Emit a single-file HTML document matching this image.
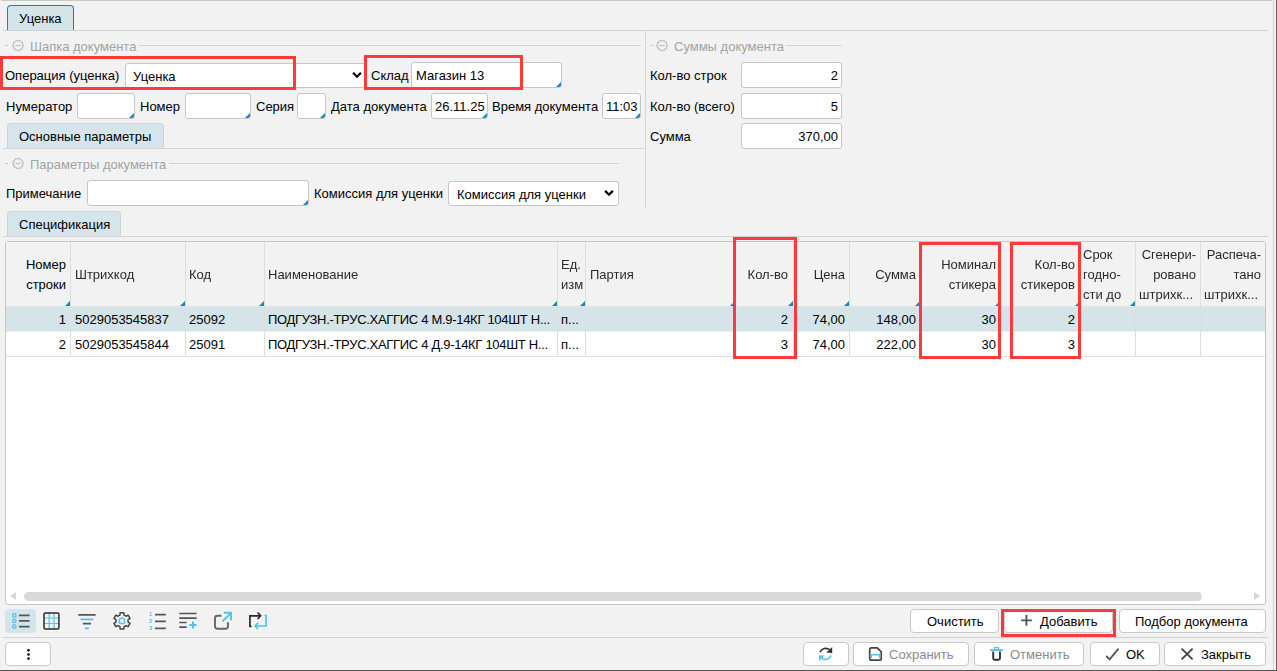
<!DOCTYPE html>
<html><head><meta charset="utf-8">
<style>
*{box-sizing:border-box;margin:0;padding:0}
html,body{width:1277px;height:671px;overflow:hidden;background:#f2f2f2;font-family:"Liberation Sans",sans-serif;font-size:13px;color:#000}
.a{position:absolute}
.t{position:absolute;white-space:nowrap;line-height:15px}
.r{text-align:right}
.hl{position:absolute;height:1px;background:#d2d2d2}
.vl{position:absolute;width:1px;background:#d2d2d2}
.inp{position:absolute;background:#fff;border:1px solid #c6c6c6;border-radius:3px}
.tri{position:absolute;width:0;height:0;border-style:solid;border-width:0 0 5px 5px;border-color:transparent transparent #0b87c4 transparent;border-bottom-right-radius:2.5px}
.gh{color:#a2a2a2}
.circ{position:absolute;width:11px;height:11px;border:1.3px solid #c4c4c4;border-radius:50%}
.circ:after{content:"";position:absolute;left:2px;right:2px;top:3.6px;height:1.3px;background:#c4c4c4}
.dash{position:absolute;width:3px;height:1px;background:#c8c8c8}
.tab{position:absolute;background:#d5e5eb;border:1px solid #c9d7dc;border-bottom:none;border-radius:4px 4px 0 0}
.red{position:absolute;border:3px solid #fc3a3a}
.btn{position:absolute;background:#fff;border:1px solid #c9c9c9;border-radius:4px}
.chev{position:absolute;width:7px;height:7px;border-right:2px solid #111;border-bottom:2px solid #111;transform:rotate(45deg)}
.hd{color:#2a2a2a;will-change:transform}
.gv{position:absolute;width:1px;background:#dedede}
</style></head><body>
<!-- frame lines -->
<div class="hl" style="left:1px;top:0;width:1271px;background:#c9c9c9"></div>
<div class="vl" style="left:1273px;top:0;height:671px;background:#d6d6d6"></div>
<div class="vl" style="left:1276px;top:0;height:671px;background:#636363"></div>
<div class="hl" style="left:0;top:670px;width:1277px;background:#555"></div>

<!-- Top tab -->
<div class="tab" style="left:7px;top:5px;width:67px;height:26px;border:1.5px solid #0b87c0;border-bottom:none;background:#d4e5e9"></div>
<div class="t" style="left:19px;top:11px">Уценка</div>
<div class="hl" style="left:3px;top:30px;width:1265px"></div>

<!-- vertical divider -->
<div class="vl" style="left:645px;top:31px;height:178px;background:#d4d4d4"></div>

<!-- Group: Шапка документа -->
<div class="dash" style="left:5px;top:45px"></div>
<svg class="a" style="left:0;top:0" width="1277" height="671" viewBox="0 0 1277 671"><g fill="none" stroke="#c3c3c3"><circle cx="18.1" cy="45.5" r="4.95" stroke-width="1.5"/><path d="M15.4 45.5H20.7" stroke-width="1.3"/></g></svg>
<div class="t gh" style="left:30px;top:39px">Шапка документа</div>
<div class="hl" style="left:139px;top:45px;width:502px"></div>

<!-- Row A -->
<div class="t" style="left:5px;top:68px">Операция (уценка)</div>
<div class="inp" style="left:125px;top:63px;width:241px;height:25px"></div>
<div class="t" style="left:133px;top:69px">Уценка</div>
<svg class="a" style="left:0;top:0" width="1277" height="671" viewBox="0 0 1277 671"><path d="M353.1 72.8L357.0 76.7L360.9 72.8" fill="none" stroke="#000" stroke-width="2.2"/></svg>
<div class="t" style="left:371px;top:68px">Склад</div>
<div class="inp" style="left:411px;top:62px;width:151px;height:26px"></div>
<div class="tri" style="left:556px;top:82px"></div>
<div class="t" style="left:416px;top:68px">Магазин 13</div>

<!-- Row B -->
<div class="t" style="left:6px;top:99px">Нумератор</div>
<div class="inp" style="left:77px;top:93px;width:58px;height:26px"></div>
<div class="tri" style="left:129px;top:113px"></div>
<div class="t" style="left:140px;top:99px">Номер</div>
<div class="inp" style="left:185px;top:93px;width:66px;height:26px"></div>
<div class="tri" style="left:245px;top:113px"></div>
<div class="t" style="left:256px;top:99px">Серия</div>
<div class="inp" style="left:297px;top:93px;width:29px;height:26px"></div>
<div class="tri" style="left:320px;top:113px"></div>
<div class="t" style="left:331px;top:99px">Дата документа</div>
<div class="inp" style="left:431px;top:93px;width:57px;height:26px"></div>
<div class="tri" style="left:482px;top:113px"></div>
<div class="t" style="left:435px;top:99px">26.11.25</div>
<div class="t" style="left:492px;top:99px">Время документа</div>
<div class="inp" style="left:602px;top:93px;width:39px;height:26px"></div>
<div class="tri" style="left:635px;top:113px"></div>
<div class="t" style="left:606px;top:99px">11:03</div>

<!-- Right: Суммы документа -->
<div class="dash" style="left:650px;top:45px"></div>
<svg class="a" style="left:0;top:0" width="1277" height="671" viewBox="0 0 1277 671"><g fill="none" stroke="#c3c3c3"><circle cx="662.1" cy="45.5" r="4.95" stroke-width="1.5"/><path d="M659.4 45.5H664.7" stroke-width="1.3"/></g></svg>
<div class="t gh" style="left:674px;top:39px">Суммы документа</div>
<div class="hl" style="left:786px;top:45px;width:56px"></div>
<div class="t" style="left:650px;top:68px">Кол-во строк</div>
<div class="inp" style="left:741px;top:62px;width:101px;height:26px"></div>
<div class="t r" style="left:741px;top:68px;width:97px">2</div>
<div class="t" style="left:650px;top:99px">Кол-во (всего)</div>
<div class="inp" style="left:741px;top:93px;width:101px;height:26px"></div>
<div class="t r" style="left:741px;top:99px;width:97px">5</div>
<div class="t" style="left:650px;top:129px">Сумма</div>
<div class="inp" style="left:741px;top:123px;width:101px;height:26px"></div>
<div class="t r" style="left:741px;top:129px;width:97px">370,00</div>

<!-- Tab Основные параметры -->
<div class="tab" style="left:7px;top:123px;width:157px;height:26px"></div>
<div class="t" style="left:19px;top:129px">Основные параметры</div>
<div class="hl" style="left:3px;top:148px;width:642px"></div>

<!-- Group Параметры документа -->
<div class="dash" style="left:5px;top:163px"></div>
<svg class="a" style="left:0;top:0" width="1277" height="671" viewBox="0 0 1277 671"><g fill="none" stroke="#c3c3c3"><circle cx="18.1" cy="163.5" r="4.95" stroke-width="1.5"/><path d="M15.4 163.5H20.7" stroke-width="1.3"/></g></svg>
<div class="t gh" style="left:30px;top:157px">Параметры документа</div>
<div class="hl" style="left:169px;top:163px;width:450px"></div>

<div class="t" style="left:6px;top:186px">Примечание</div>
<div class="inp" style="left:87px;top:180px;width:222px;height:26px"></div>
<div class="tri" style="left:303px;top:200px"></div>
<div class="t" style="left:314px;top:186px">Комиссия для уценки</div>
<div class="inp" style="left:448px;top:181px;width:171px;height:25px"></div>
<div class="t" style="left:457px;top:187px">Комиссия для уценки</div>
<svg class="a" style="left:0;top:0" width="1277" height="671" viewBox="0 0 1277 671"><path d="M605.1 190.9L609.0 194.8L612.9 190.9" fill="none" stroke="#000" stroke-width="2.2"/></svg>

<!-- Tab Спецификация -->
<div class="tab" style="left:7px;top:211px;width:114px;height:26px"></div>
<div class="t" style="left:19px;top:217px">Спецификация</div>
<div class="hl" style="left:3px;top:236px;width:1265px"></div>

<!-- Grid -->
<div class="a" style="left:5px;top:241px;width:1261px;height:364px;background:#fff;border:1px solid #c6c6c6;border-radius:3px;overflow:hidden"></div>
<div class="a" style="left:6px;top:242px;width:1259px;height:64px;background:#f2f2f2;border-radius:2px 2px 0 0"></div>
<div class="a" style="left:6px;top:306px;width:1259px;height:1px;background:#e3e6e7"></div><div class="a" style="left:6px;top:307px;width:1259px;height:24px;background:#d4e4e9"></div><div class="a" style="left:6px;top:331px;width:1259px;height:1px;background:#ededed"></div>
<div class="a" style="left:6px;top:356px;width:1259px;height:1px;background:#e2e2e2"></div>
<div class="gv" style="left:70px;top:242px;height:115px"></div>
<div class="gv" style="left:185px;top:242px;height:115px"></div>
<div class="gv" style="left:264px;top:242px;height:115px"></div>
<div class="gv" style="left:557px;top:242px;height:115px"></div>
<div class="gv" style="left:585px;top:242px;height:115px"></div>
<div class="gv" style="left:735px;top:242px;height:115px"></div>
<div class="gv" style="left:793px;top:242px;height:115px"></div>
<div class="gv" style="left:849px;top:242px;height:115px"></div>
<div class="gv" style="left:920px;top:242px;height:115px"></div>
<div class="gv" style="left:1000px;top:242px;height:115px"></div>
<div class="gv" style="left:1080px;top:242px;height:115px"></div>
<div class="gv" style="left:1135px;top:242px;height:115px"></div>
<div class="gv" style="left:1200px;top:242px;height:115px"></div>
<div class="tri" style="left:65px;top:301px;border-radius:0"></div>
<div class="tri" style="left:180px;top:301px;border-radius:0"></div>
<div class="tri" style="left:259px;top:301px;border-radius:0"></div>
<div class="tri" style="left:552px;top:301px;border-radius:0"></div>
<div class="tri" style="left:580px;top:301px;border-radius:0"></div>
<div class="tri" style="left:730px;top:301px;border-radius:0"></div>
<div class="tri" style="left:788px;top:301px;border-radius:0"></div>
<div class="tri" style="left:844px;top:301px;border-radius:0"></div>
<div class="tri" style="left:915px;top:301px;border-radius:0"></div>
<div class="tri" style="left:995px;top:301px;border-radius:0"></div>
<div class="tri" style="left:1075px;top:301px;border-radius:0"></div>
<div class="tri" style="left:1130px;top:301px;border-radius:0"></div>
<div class="t r " style="left:-134px;top:257px;width:200px">Номер</div>
<div class="t r " style="left:-134px;top:277px;width:200px">строки</div>
<div class="t hd " style="left:75px;top:267px">Штрихкод</div>
<div class="t hd " style="left:189px;top:267px">Код</div>
<div class="t hd " style="left:268px;top:267px">Наименование</div>
<div class="t hd " style="left:561px;top:257px">Ед.</div>
<div class="t hd " style="left:561px;top:277px">изм</div>
<div class="t hd " style="left:590px;top:267px">Партия</div>
<div class="t hd r " style="left:588px;top:267px;width:200px">Кол-во</div>
<div class="t hd r " style="left:645px;top:267px;width:200px">Цена</div>
<div class="t hd r " style="left:716px;top:267px;width:200px">Сумма</div>
<div class="t hd r " style="left:796px;top:257px;width:200px">Номинал</div>
<div class="t hd r " style="left:796px;top:277px;width:200px">стикера</div>
<div class="t hd r " style="left:875px;top:257px;width:200px">Кол-во</div>
<div class="t hd r " style="left:875px;top:277px;width:200px">стикеров</div>
<div class="t hd " style="left:1083px;top:247px">Срок</div>
<div class="t hd " style="left:1083px;top:267px">годно-</div>
<div class="t hd " style="left:1083px;top:287px">сти до</div>
<div class="t hd r " style="left:996px;top:247px;width:200px">Сгенери-</div>
<div class="t hd r " style="left:996px;top:267px;width:200px">ровано</div>
<div class="t hd r " style="left:993px;top:287px;width:200px">штрихк...</div>
<div class="t hd r " style="left:1061px;top:247px;width:200px">Распеча-</div>
<div class="t hd r " style="left:1061px;top:267px;width:200px">тано</div>
<div class="t hd r " style="left:1058px;top:287px;width:200px">штрихк...</div>
<div class="t r " style="left:-134px;top:312px;width:200px">1</div>
<div class="t " style="left:75px;top:312px">5029053545837</div>
<div class="t " style="left:189px;top:312px">25092</div>
<div class="t" style="left:268px;top:312px;letter-spacing:-0.3px">ПОДГУЗН.-ТРУС.ХАГГИС 4 М.9-14КГ 104ШТ Н...</div>
<div class="t " style="left:561px;top:312px">п...</div>
<div class="t r " style="left:588px;top:312px;width:200px">2</div>
<div class="t r " style="left:645px;top:312px;width:200px">74,00</div>
<div class="t r " style="left:716px;top:312px;width:200px">148,00</div>
<div class="t r " style="left:796px;top:312px;width:200px">30</div>
<div class="t r " style="left:875px;top:312px;width:200px">2</div>
<div class="t r " style="left:-134px;top:337px;width:200px">2</div>
<div class="t " style="left:75px;top:337px">5029053545844</div>
<div class="t " style="left:189px;top:337px">25091</div>
<div class="t" style="left:268px;top:337px;letter-spacing:-0.3px">ПОДГУЗН.-ТРУС.ХАГГИС 4 Д.9-14КГ 104ШТ Н...</div>
<div class="t " style="left:561px;top:337px">п...</div>
<div class="t r " style="left:588px;top:337px;width:200px">3</div>
<div class="t r " style="left:645px;top:337px;width:200px">74,00</div>
<div class="t r " style="left:716px;top:337px;width:200px">222,00</div>
<div class="t r " style="left:796px;top:337px;width:200px">30</div>
<div class="t r " style="left:875px;top:337px;width:200px">3</div>
<div class="a" style="left:10px;top:592px;width:0;height:0;border-style:solid;border-width:4.5px 6px 4.5px 0;border-color:transparent #d6d6d6 transparent transparent"></div>
<div class="a" style="left:24px;top:592px;width:1178px;height:9px;background:#d9d9d9;border-radius:4.5px"></div>
<div class="a" style="left:1254px;top:592px;width:0;height:0;border-style:solid;border-width:4.5px 0 4.5px 6px;border-color:transparent transparent transparent #d6d6d6"></div>
<div class="hl" style="left:3px;top:637px;width:1265px"></div>
<div class="a" style="left:5px;top:609px;width:31px;height:24px;background:#d3e4ea;border-radius:4px"></div>
<div class="btn" style="left:910px;top:609px;width:89px;height:24px"></div>
<div class="t" style="left:927px;top:614px">Очистить</div>
<div class="btn" style="left:1004px;top:610px;width:109px;height:23px"></div>
<div class="t" style="left:1040px;top:614px">Добавить</div>
<div class="btn" style="left:1119px;top:609px;width:147px;height:24px"></div>
<div class="t" style="left:1135px;top:614px">Подбор документа</div>
<div class="btn" style="left:5px;top:642px;width:46px;height:24px"></div>
<div class="btn" style="left:803px;top:642px;width:46px;height:24px"></div>
<div class="btn" style="left:853px;top:642px;width:116px;height:24px"></div>
<div class="t" style="left:889px;top:647px;color:#8a8a8a">Сохранить</div>
<div class="btn" style="left:974px;top:642px;width:110px;height:24px"></div>
<div class="t" style="left:1010px;top:647px;color:#8a8a8a">Отменить</div>
<div class="btn" style="left:1090px;top:642px;width:70px;height:24px"></div>
<div class="t" style="left:1126px;top:647px">OK</div>
<div class="btn" style="left:1164px;top:642px;width:102px;height:24px"></div>
<div class="t" style="left:1201px;top:647px">Закрыть</div>
<div class="red" style="left:0;top:56px;width:296px;height:34px"></div>
<div class="red" style="left:364px;top:55px;width:159px;height:35px"></div>
<div class="red" style="left:733px;top:237px;width:64px;height:122px"></div>
<div class="red" style="left:919px;top:242px;width:82px;height:117px"></div>
<div class="red" style="left:1010px;top:242px;width:71px;height:117px"></div>
<div class="red" style="left:1001px;top:609px;width:115px;height:28px"></div>

<!-- toolbar icons -->
<svg class="a" style="left:0;top:600px" width="280" height="40" viewBox="0 600 280 40">
 <g fill="none" stroke-linecap="butt">
  <!-- list -->
  <g stroke="#4fc1ef" stroke-width="1.3"><circle cx="14.3" cy="615.4" r="1.7"/><circle cx="14.3" cy="620.9" r="1.7"/><circle cx="14.3" cy="626.6" r="1.7"/></g>
  <g stroke="#555" stroke-width="1.8"><path d="M19 615.4H29.6M19 620.9H29.6M19 626.6H29.6"/></g>
  <!-- grid -->
  <rect x="43.3" y="612.3" width="16.3" height="17.3" fill="#f4f4f4" stroke="none"/>
  <g stroke="#4fc1ef" stroke-width="1.2"><path d="M49.1 613V629M54.1 613V629M44 618H59M44 623.5H59"/></g>
  <rect x="44" y="613" width="14.9" height="15.9" rx="1.2" stroke="#2b2b2b" stroke-width="1.5"/>
  <!-- filter -->
  <path d="M78.3 614.8H95.6M82.8 623.6H91" stroke="#555" stroke-width="1.7"/>
  <path d="M80.5 619.3H93.3M84.9 628.3H88.9" stroke="#4fc1ef" stroke-width="1.7"/>
  <!-- gear -->
  <path id="gear" stroke="#444" stroke-width="1.5" stroke-linejoin="round" d="M119.98 615.04 L120.11 612.72 L123.89 612.72 L124.02 615.04 L126.07 616.22 L128.14 615.17 L130.03 618.44 L128.09 619.72 L128.09 622.08 L130.03 623.36 L128.14 626.63 L126.07 625.58 L124.02 626.76 L123.89 629.08 L120.11 629.08 L119.98 626.76 L117.93 625.58 L115.86 626.63 L113.97 623.36 L115.91 622.08 L115.91 619.72 L113.97 618.44 L115.86 615.17 L117.93 616.22Z"/>
  <circle cx="122" cy="620.9" r="2.8" stroke="#5cc6f0" stroke-width="1.5"/>
  <!-- numbered list -->
  <g fill="#4fc1ef" font-family="Liberation Sans" font-size="5.5" font-weight="bold" text-anchor="middle"><text x="150.6" y="616.4">1</text><text x="150.6" y="623.1">2</text><text x="150.6" y="629.9">3</text></g>
  <path d="M155 614.6H165.8M155 621.4H165.8M155 628.3H165.8" stroke="#555" stroke-width="1.7"/>
  <!-- lines plus -->
  <path d="M179.3 613.5H196.6M179.3 618.2H196.6M179.3 622.5H186.5M179.3 627.2H186.5" stroke="#555" stroke-width="1.7"/>
  <path d="M189.4 625H196.6M193 621.5V628.6" stroke="#4fc1ef" stroke-width="2"/>
  <!-- external -->
  <path d="M221.5 615.8H217.5Q215 615.8 215 618.3V626.3Q215 628.8 217.5 628.8H225.5Q228 628.8 228 626.3V622.3" stroke="#666" stroke-width="1.9"/>
  <path d="M222.5 621.3L231 612.8M223.8 612.8H231V620.3" stroke="#4fc1ef" stroke-width="1.9"/>
  <!-- swap -->
  <path d="M251.6 626.3H249.9V615.8H260.6M257.6 612.5L260.6 615.8L257.6 619" stroke="#2b2b2b" stroke-width="1.7"/>
  <path d="M264.4 615.5H266.1V626H255.1M258.1 622.8L255.1 626L258.1 629" stroke="#4fc1ef" stroke-width="1.7"/>
 </g>
</svg>
<!-- dots -->
<svg class="a" style="left:0;top:640px" width="60" height="30" viewBox="0 640 60 30"><g fill="#000"><circle cx="28.5" cy="650.3" r="1.3"/><circle cx="28.5" cy="654.5" r="1.3"/><circle cx="28.5" cy="658.6" r="1.3"/></g></svg>
<!-- button icons -->
<svg class="a" style="left:800px;top:606px" width="477" height="65" viewBox="800 606 477 65">
 <g fill="none">
  <!-- plus -->
  <path d="M1021 620.4H1031.9M1026.4 615.1V625.8" stroke="#555" stroke-width="1.9"/>
  <!-- refresh -->
  <path d="M820 652.2A6.2 6.2 0 0 1 829.6 649.7" stroke="#333" stroke-width="1.6"/>
  <path d="M832.2 647L832.2 652.9L826.3 652.6Z" fill="#333"/>
  <path d="M831.2 655.5A6.2 6.2 0 0 1 821.6 658.2" stroke="#56c3ef" stroke-width="1.6"/>
  <path d="M819 661L819 655.2L824.8 655.4Z" fill="#56c3ef"/>
  <!-- save -->
  <path d="M871.4 647.9H877.3L881.2 651.8V658.5Q881.2 660.2 879.5 660.2H871.4Q869.7 660.2 869.7 658.5V649.6Q869.7 647.9 871.4 647.9Z" stroke="#444" stroke-width="1.7"/>
  <path d="M871.2 658.3V654.8H879.7V658.3" stroke="#56c3ef" stroke-width="1.6"/>
  <!-- trash -->
  <path d="M990.1 650.1H1002.9" stroke="#56c3ef" stroke-width="1.9"/>
  <rect x="994.6" y="647.5" width="3.8" height="2" stroke="#56c3ef" stroke-width="1.2"/>
  <path d="M993.2 651.5V658.3Q993.2 659.8 994.7 659.8H998.5Q1000 659.8 1000 658.3V651.5" stroke="#333" stroke-width="1.9"/>
  <!-- check -->
  <path d="M1106.3 656L1109.6 659.3L1118.5 648.6" stroke="#555" stroke-width="1.8"/>
  <!-- X -->
  <path d="M1181.6 648.6L1192.6 659.4M1192.6 648.6L1181.6 659.4" stroke="#444" stroke-width="1.9"/>
 </g>
</svg>
</body></html>
